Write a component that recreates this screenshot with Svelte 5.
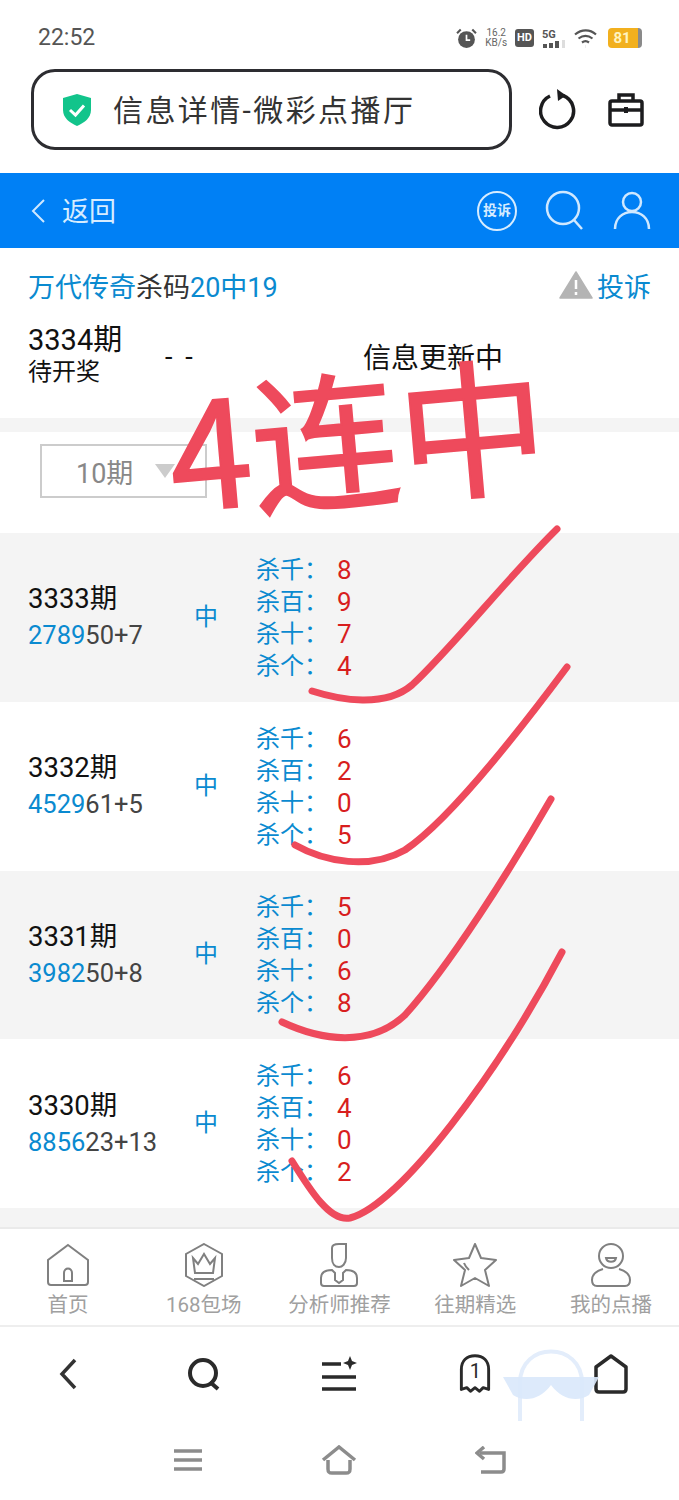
<script>
  const rows = [
    { period: '3333期', hot: '2789', rest: '50+7', kills: [8, 9, 7, 4] },
    { period: '3332期', hot: '4529', rest: '61+5', kills: [6, 2, 0, 5] },
    { period: '3331期', hot: '3982', rest: '50+8', kills: [5, 0, 6, 8] },
    { period: '3330期', hot: '8856', rest: '23+13', kills: [6, 4, 0, 2] }
  ];
  const places = ['杀千：', '杀百：', '杀十：', '杀个：'];
</script>

<div class="page">
  <div class="status">
    <span class="clock">22:52</span>
    <div class="status-icons">
      <svg width="21" height="21" viewBox="0 0 20 20"><circle cx="10" cy="11" r="8" fill="#555" /><path d="M10 6.500V11.500H13.500" stroke="#fff" stroke-width="1.600" fill="none" /><path d="M1 5L4.500 1.500M19 5L15.500 1.500" stroke="#555" stroke-width="2" /></svg>
      <div class="speed"><span>16.2</span><span>KB/s</span></div>
      <span class="hd">HD</span>
      <div class="fiveg">
        <span>5G</span>
        <svg width="24" height="8" viewBox="0 0 24 8"><path d="M1 4h4v4H1zM7 3h4v5H7zM13 1h4v7h-4z" fill="#555" /><path d="M20 0h3v8h-3z" fill="#ddd" /></svg>
      </div>
      <svg width="26" height="20" viewBox="0 0 26 20" fill="none" stroke="#555" stroke-width="2.200"><path d="M1 6.500C7.500 1 16 1 22 6.500" /><path d="M4.500 10.500C9 7 14 7 18.500 10.500" /><path d="M8 14.500C10 13 13 13 15 14.500" /><path d="M11.500 18.500h.1" stroke-width="3" /><path d="M24.500 12v.1M24.500 17v.1" stroke-width="2.500" /></svg>
      <div class="battery"><span>81</span></div>
    </div>
  </div>

  <div class="address-row">
    <div class="address">
      <svg width="32" height="34" viewBox="0 0 32 34"><path d="M16 1L30 5V17C30 25 23 30 16 33C9 30 2 25 2 17V5Z" fill="#12c48b" /><path d="M9 17L14.500 22L23 12.500" fill="none" stroke="#fff" stroke-width="3" /></svg>
      <span>信息详情-微彩点播厅</span>
    </div>
    <svg class="reload" width="38" height="42" viewBox="0 0 38 42" fill="none"><path d="M24 7.500A16.500 16.500 0 1 1 11 8" stroke="#1c1c1e" stroke-width="3.500" /><path d="M18 1L27 7.500L19 13Z" fill="#1c1c1e" /></svg>
    <svg class="kit" width="36" height="34" viewBox="0 0 36 34" fill="none" stroke="#1c1c1e" stroke-width="3.500"><rect x="2" y="8" width="32" height="24" rx="2" /><path d="M11 8V2H25V8M2 17H34" /><path d="M18 14V20" stroke-width="4" /></svg>
  </div>

  <header class="topbar">
    <div class="back">
      <svg width="16" height="26" viewBox="0 0 16 26" fill="none" stroke="#cfe8ff" stroke-width="2"><path d="M14 2L3 13L14 24" /></svg>
      <span>返回</span>
    </div>
    <div class="top-icons">
      <div class="report-badge">投诉</div>
      <svg width="40" height="42" viewBox="0 0 40 42" fill="none" stroke="#cfe8ff" stroke-width="2.500"><circle cx="18" cy="18" r="16" /><path d="M29 30L37 39" /></svg>
      <svg width="38" height="40" viewBox="0 0 38 40" fill="none" stroke="#cfe8ff" stroke-width="2.500"><circle cx="19" cy="11" r="9" /><path d="M2 38C2 27 10 21 19 21C28 21 36 27 36 38" /></svg>
    </div>
  </header>

  <section class="summary">
    <div class="title-row">
      <div class="title"><span class="blue">万代传奇</span>杀码<span class="blue">20中19</span></div>
      <div class="complain">
        <svg width="34" height="28" viewBox="0 0 34 28"><path d="M17 1L33 27H1Z" fill="#b4b4b4" stroke="#b4b4b4" stroke-width="1.500" stroke-linejoin="round" /><path d="M17 9V18M17 21V24" stroke="#fff" stroke-width="2.500" /></svg>
        <span>投诉</span>
      </div>
    </div>
    <div class="current">
      <div class="current-period">
        <div class="num">3334期</div>
        <div class="wait">待开奖</div>
      </div>
      <div class="dash">- -</div>
      <div class="updating">信息更新中</div>
    </div>
  </section>

  <section class="filter">
    <div class="select">
      <span>10期</span>
      <i class="caret"></i>
    </div>
  </section>

  <section class="list">
    {#each rows as row, i}
      <div class="row" class:shade={i % 2 === 0}>
        <div class="issue">
          <div class="num">{row.period}</div>
          <div class="code"><span class="blue">{row.hot}</span>{row.rest}</div>
        </div>
        <div class="hit">中</div>
        <div class="kills">
          {#each row.kills as n, k}
            <div class="kill"><span class="blue">{places[k]}</span><b>{n}</b></div>
          {/each}
        </div>
      </div>
    {/each}
  </section>

  <div class="spacer"></div>

  <nav class="tabs">
    <div class="tab">
      <svg width="44" height="44" viewBox="0 0 44 44" fill="none"><path d="M22 2L42 17V39C42 41 41 42 39 42H5C3 42 2 41 2 39V17Z" /><path d="M18 38V30C18 24 26 24 26 30V38Z" /></svg>
      <span>首页</span>
    </div>
    <div class="tab">
      <svg width="44" height="44" viewBox="0 0 44 44" fill="none"><path d="M22 1L40 11V33L22 43L4 33V11Z" /><path d="M11 15L16 21L22 11L28 21L33 15L31 30H13Z" /><path d="M12 36H32" /></svg>
      <span>168包场</span>
    </div>
    <div class="tab">
      <svg width="44" height="44" viewBox="0 0 44 44" fill="none"><path d="M15 5C15 2 18 1 22 1H29V15C29 21 25 24 22 24C18 24 15 21 15 15Z" /><path d="M15 27C8 27 4 30 4 35V40C4 42 5 43 7 43H37C39 43 40 42 40 40V35C40 30 36 27 29 27L26 30V37L22 40L18 37V30Z" /></svg>
      <span>分析师推荐</span>
    </div>
    <div class="tab">
      <svg width="44" height="44" viewBox="0 0 44 44" fill="none"><path d="M22 1L28 15L43 17L32 27L36 43L22 35L8 43L12 27L1 17L16 15Z" stroke-linejoin="round" /><path d="M11 20C12 23 14 25 16 27" /></svg>
      <span>往期精选</span>
    </div>
    <div class="tab">
      <svg width="44" height="44" viewBox="0 0 44 44" fill="none"><ellipse cx="22" cy="13" rx="12" ry="12" /><path d="M17 15H27C26 20 18 20 17 15Z" /><path d="M14 26C7 28 3 32 3 37C3 41 5 43 8 43H36C39 43 41 41 41 37C41 32 37 28 30 26" /></svg>
      <span>我的点播</span>
    </div>
  </nav>

  <div class="browser-bar">
    <svg width="22" height="34" viewBox="0 0 22 34" fill="none" stroke="#333" stroke-width="3.500"><path d="M18 3L5 17L18 31" /></svg>
    <svg width="36" height="36" viewBox="0 0 36 36" fill="none" stroke="#2a2a2a" stroke-width="4"><circle cx="17" cy="17" r="13" /><path d="M24 26L32 33" /></svg>
    <svg width="36" height="36" viewBox="0 0 36 36" fill="none" stroke="#2a2a2a" stroke-width="3.500"><path d="M1 8H20M1 21H35M1 33H35" /><path d="M29 0L31 5L36 7L31 9L29 14L27 9L22 7L27 5Z" fill="#2a2a2a" stroke="none" /></svg>
    <div class="tabs-count">
      <svg width="34" height="40" viewBox="0 0 34 44" fill="none" stroke="#2a2a2a" stroke-width="3.200"><path d="M2 39V17C2 7 8 2 17 2C26 2 32 7 32 17V39L26 37L22 41L17 37L12 41L8 37Z" stroke-linejoin="round" /></svg>
      <span>1</span>
    </div>
    <svg width="34" height="40" viewBox="0 0 34 40" fill="none" stroke="#2a2a2a" stroke-width="3.500"><path d="M17 2L32 13V35C32 37 31 38 29 38H5C3 38 2 37 2 35V13Z" stroke-linejoin="round" /></svg>
    <svg class="ghost" width="96" height="72" viewBox="0 0 96 72"><path d="M17 72V34C17 -8 79 -8 79 34V72" fill="none" stroke="#e3edfb" stroke-width="4" /><path d="M0 28H96L86 46C74 54 58 50 48 36C38 50 22 54 10 46Z" fill="#d9e8fb" opacity="0.9" /></svg>
  </div>

  <div class="system-bar">
    <svg width="30" height="24" viewBox="0 0 30 24" fill="none" stroke="#8c8c8c" stroke-width="3.500"><path d="M1 3H29M1 12H29M1 21H29" /></svg>
    <svg width="36" height="30" viewBox="0 0 36 30" fill="none" stroke="#8c8c8c" stroke-width="3.500"><path d="M2 15L18 2L34 15" /><path d="M7 15V24C7 27 8 28 11 28H25C28 28 29 27 29 24V15" /></svg>
    <svg width="32" height="28" viewBox="0 0 32 28" fill="none" stroke="#8c8c8c" stroke-width="3.500"><path d="M5 7H29V23C29 25 28 26 26 26H6" /><path d="M9 1L2 7L9 13" /></svg>
  </div>

  <svg class="marks" width="679" height="1500" viewBox="0 0 679 1500" fill="none" stroke="#ee4a5c" stroke-width="7" stroke-linecap="round">
    <path d="M312 691C340 700 385 708 412 685C450 650 510 575 557 529" />
    <path d="M295 845C325 862 370 870 405 850C450 820 520 730 567 667" />
    <path d="M282 1022C320 1040 370 1048 405 1015C450 965 510 870 551 799" />
    <path d="M292 1161C310 1190 330 1222 350 1218C400 1205 500 1070 562 952" />
  </svg>
  <div class="scrawl">4连中</div>
</div>

<style>
  :global(body) {
    margin: 0;
    background: #fff;
  }

  .page {
    position: relative;
    width: 679px;
    height: 1500px;
    overflow: hidden;
    font-family: Roboto, "Noto Sans CJK SC", sans-serif;
    color: #222;
  }

  .blue {
    color: #0a8ad0;
  }

  .status {
    height: 69px;
    box-sizing: border-box;
    padding: 24px 37px 0 38px;
    display: flex;
    justify-content: space-between;
    align-items: flex-start;
  }

  .clock {
    font-size: 23px;
    line-height: 28px;
    color: #555;
  }

  .status-icons {
    display: flex;
    align-items: center;
    gap: 8px;
    height: 28px;
  }

  .speed {
    display: flex;
    flex-direction: column;
    align-items: center;
    font-size: 10px;
    line-height: 10px;
    color: #666;
  }

  .hd {
    background: #555;
    color: #fff;
    border-radius: 3px;
    font-size: 11px;
    font-weight: 700;
    padding: 2px 2px;
    line-height: 14px;
  }

  .fiveg {
    display: flex;
    flex-direction: column;
    font-size: 11px;
    font-weight: 700;
    line-height: 11px;
    color: #555;
  }

  .battery {
    width: 28px;
    height: 20px;
    border-radius: 4px;
    background: linear-gradient(90deg, #f2b01e 88%, #8a8a8a 88%);
    color: #fff4c0;
    font-size: 15px;
    font-weight: 700;
    line-height: 20px;
    padding-right: 6px;
    text-align: center;
  }

  .address-row {
    height: 104px;
    box-sizing: border-box;
    padding-left: 31px;
    display: flex;
    align-items: flex-start;
  }

  .address {
    width: 481px;
    height: 81px;
    box-sizing: border-box;
    border: 3px solid #2d2d31;
    border-radius: 24px;
    display: flex;
    align-items: center;
    gap: 20px;
    padding-left: 27px;
    font-size: 30px;
    letter-spacing: 2.400px;
    color: #333;
  }

  .address span {
    margin-top: -3px;
  }

  .reload {
    margin: 19px 0 0 27px;
  }

  .kit {
    margin: 24px 0 0 31px;
  }

  .topbar {
    height: 75px;
    background: #0080f5;
    display: flex;
    align-items: center;
    justify-content: space-between;
    padding: 0 28px 0 30px;
    color: #d6ecff;
  }

  .back {
    display: flex;
    align-items: center;
    gap: 16px;
    font-size: 27px;
  }

  .back span {
    margin-top: -2px;
  }

  .top-icons {
    display: flex;
    align-items: center;
    gap: 28px;
  }

  .report-badge {
    width: 40px;
    height: 40px;
    border: 2.500px solid #d6ecff;
    border-radius: 50%;
    box-sizing: border-box;
    font-size: 14px;
    font-weight: 700;
    line-height: 35px;
    text-align: center;
  }

  .summary {
    height: 170px;
    box-sizing: border-box;
    padding: 19px 28px 0;
  }

  .title-row {
    display: flex;
    justify-content: space-between;
    align-items: center;
    height: 36px;
  }

  .title {
    font-size: 27px;
    color: #333;
  }

  .complain {
    display: flex;
    align-items: center;
    gap: 4px;
    font-size: 27px;
    color: #0a8ad0;
  }

  .current {
    display: flex;
    margin-top: 19px;
    color: #111;
  }

  .current-period {
    width: 137px;
  }

  .current-period .num {
    font-size: 29px;
    line-height: 36px;
  }

  .wait {
    font-size: 24px;
    line-height: 28px;
  }

  .dash {
    width: 198px;
    font-size: 27px;
    line-height: 36px;
    margin-top: 17px;
    letter-spacing: 3px;
  }

  .updating {
    font-size: 28px;
    line-height: 36px;
    margin-top: 19px;
  }

  .filter {
    box-sizing: border-box;
    border-top: 14px solid #f4f4f4;
    height: 115px;
    padding: 12px 0 0 40px;
  }

  .select {
    width: 167px;
    height: 54px;
    box-sizing: border-box;
    border: 2px solid #ccc;
    display: flex;
    align-items: center;
    padding-left: 34px;
    gap: 22px;
    font-size: 27px;
    color: #888;
  }

  .caret {
    width: 0;
    height: 0;
    border-left: 10px solid transparent;
    border-right: 10px solid transparent;
    border-top: 14px solid #ccc;
  }

  .row {
    height: 168.750px;
    box-sizing: border-box;
    padding-left: 28px;
    display: flex;
    align-items: center;
  }

  .row.shade {
    background: #f4f4f4;
  }

  .issue {
    width: 166px;
  }

  .issue .num {
    font-size: 27.500px;
    line-height: 36px;
    color: #111;
  }

  .code {
    font-size: 25.500px;
    line-height: 36px;
    color: #444;
  }

  .hit {
    width: 62px;
    font-size: 24px;
    color: #0a8ad0;
    margin-top: -6px;
  }

  .kills {
    margin-top: 1px;
  }

  .kill {
    height: 32px;
    line-height: 32px;
    font-size: 24px;
    display: flex;
  }

  .kill b {
    font-weight: 400;
    font-size: 26px;
    color: #d81e1e;
    margin-left: 9px;
  }

  .spacer {
    height: 19px;
    background: #f4f4f4;
  }

  .tabs {
    height: 100px;
    box-sizing: border-box;
    border-top: 2px solid #eaeaea;
    border-bottom: 2px solid #eee;
    display: grid;
    grid-template-columns: repeat(5, 135.800px);
  }

  .tab {
    display: flex;
    flex-direction: column;
    align-items: center;
    padding-top: 14px;
    gap: 3px;
    font-size: 20.500px;
    line-height: 30px;
    color: #a0a0a0;
  }

  .tab svg {
    stroke: #808080;
    stroke-width: 2;
  }

  .browser-bar {
    position: relative;
    height: 94px;
    display: grid;
    grid-template-columns: repeat(5, 135.800px);
    justify-items: center;
    align-items: center;
  }

  .tabs-count {
    position: relative;
    height: 40px;
  }

  .tabs-count span {
    position: absolute;
    left: 0;
    right: 0;
    top: 5px;
    text-align: center;
    font-size: 20px;
    line-height: 24px;
    color: #2a2a2a;
  }

  .ghost {
    position: absolute;
    left: 503px;
    top: 22px;
  }

  .system-bar {
    height: 78px;
    display: flex;
    justify-content: center;
    align-items: center;
    gap: 118px;
  }

  .marks {
    position: absolute;
    left: 0;
    top: 0;
    pointer-events: none;
  }

  .scrawl {
    position: absolute;
    left: 168px;
    top: 332px;
    font-family: "Noto Sans CJK SC", sans-serif;
    font-size: 148px;
    line-height: 200px;
    color: #ee4a5c;
    white-space: nowrap;
    transform: rotate(-5deg);
    -webkit-text-stroke: 2px #ee4a5c;
  }
</style>
